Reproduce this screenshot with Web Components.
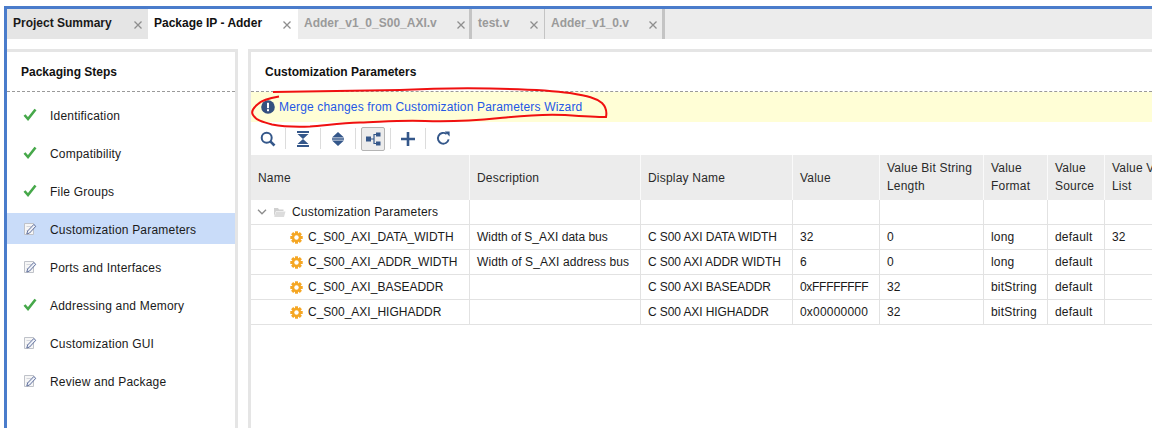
<!DOCTYPE html>
<html><head><meta charset="utf-8">
<style>
html,body{margin:0;padding:0;height:428px;overflow:hidden;background:#fff;font-family:"Liberation Sans",Arial,sans-serif;font-size:12px;color:#111}
</style></head><body>
<ide-shell></ide-shell>
<script>
const ICONS={
check:`<svg width="14" height="13" viewBox="0 0 14 13"><path d="M1.500 7 L5 11 L12.500 1.500" fill="none" stroke="#46a84a" stroke-width="2.600"/></svg>`,
edit:`<svg width="14" height="14" viewBox="0 0 14 14"><path d="M1.500 1.500H10.500V12.500H1.500Z" fill="#f6f6f6" stroke="#bfc2c9"/><path d="M3.500 8.500H7M3.500 4.500H8" stroke="#d4d6dc"/><path d="M3.800 12 L4.600 9 L10.800 2.500 L12.800 4.300 L6.600 11Z" fill="#eef1f8" stroke="#5f6f9c"/></svg>`,
gear:`<svg width="13" height="13" viewBox="0 0 13 13"><g fill="#f5a623"><circle cx="6.500" cy="6.500" r="4.600"/><rect x="5" y="0.300" width="3" height="12.400"/><rect x="0.300" y="5" width="12.400" height="3"/><rect x="5" y="0.300" width="3" height="12.400" transform="rotate(45 6.500 6.500)"/><rect x="5" y="0.300" width="3" height="12.400" transform="rotate(-45 6.500 6.500)"/></g><circle cx="6.500" cy="6.500" r="2.200" fill="#fff"/></svg>`,
folder:`<svg width="13" height="12" viewBox="0 0 13 12"><path d="M1 2h4l1 1.400h4.500V5H3L1 10.500Z" fill="#d0d0d0"/><path d="M3.200 5.500H12.500L11 11H1.200Z" fill="#dcdcdc"/></svg>`,
chev:`<svg width="10" height="6" viewBox="0 0 10 6"><path d="M1 .8 L5 4.800 L9 .8" fill="none" stroke="#8c8c8c" stroke-width="1.300"/></svg>`,
x:`<svg width="8" height="8" viewBox="0 0 8 8"><path d="M.5 .5L7.500 7.500M7.500 .5L.5 7.500" stroke="#8e8e8e" stroke-width="1.300"/></svg>`,
search:`<svg width="16" height="16" viewBox="0 0 16 16"><circle cx="6.700" cy="6.700" r="5" fill="none" stroke="#34578a" stroke-width="2"/><path d="M10.300 10.300L14.500 14.500" stroke="#34578a" stroke-width="2.600"/></svg>`,
collapse:`<svg width="14" height="16" viewBox="0 0 14 16"><path d="M1 1H13M1 15H13" stroke="#34578a" stroke-width="2"/><path d="M1.500 3H12.500L7 8ZM1.500 13H12.500L7 8Z" fill="#34578a"/></svg>`,
expand:`<svg width="14" height="16" viewBox="0 0 14 16"><path d="M7 1L13 6.500H1ZM7 15L13 9.500H1Z" fill="#34578a"/><path d="M1 8H13" stroke="#34578a" stroke-width="1.500"/></svg>`,
hier:`<svg width="16" height="14" viewBox="0 0 16 14"><rect x="1" y="4.500" width="5" height="5" fill="#34578a"/><rect x="11" y="0.500" width="4.500" height="4" fill="#34578a"/><rect x="11" y="9.500" width="4.500" height="4" fill="#34578a"/><path d="M6 7H9V2.500H11M9 7V11.500H11" fill="none" stroke="#34578a" stroke-width="1.200"/></svg>`,
plus:`<svg width="14" height="14" viewBox="0 0 14 14"><path d="M7 0V14M0 7H14" stroke="#34578a" stroke-width="2.600"/></svg>`,
refresh:`<svg width="15" height="15" viewBox="0 0 15 15"><path d="M12.600 8.400A5.400 5.400 0 1 1 10.600 3" fill="none" stroke="#34578a" stroke-width="1.900"/><path d="M8.800 0.600H13.600V5.600Z" fill="#34578a"/></svg>`,
info:`<svg width="14" height="14" viewBox="0 0 14 14"><circle cx="7" cy="7" r="6.800" fill="#34507f"/><rect x="6" y="2.800" width="2" height="5.400" fill="#fff"/><rect x="6" y="9.200" width="2" height="2" fill="#fff"/></svg>`
};
function def(name,css,html){
  customElements.define(name,class extends HTMLElement{
    constructor(){super();this.attachShadow({mode:'open'}).innerHTML=`<style>${css}</style>`+(typeof html==='function'?html(this):html);}
  });
}
def('ide-tab',`:host{display:flex;height:30px;box-sizing:border-box;position:relative;font:bold 12px "Liberation Sans",Arial,sans-serif;color:#9a9a9a;background:#ececec;padding:7px 0 0 6px}
:host([first]){background:#e5e5e5;color:#1a1a1a}
:host([active]){background:#fff;color:#111}
:host([sep]){border-right:3px solid #c4c4c4}
:host([thin]){border-right:1px solid #c4c4c4}
.x{position:absolute;right:var(--xr,6px);top:12px;display:flex}`,`<slot></slot><span class="x">${ICONS.x}</span>`);
def('tab-bar',`:host{display:flex;height:30px;background:#ececec}`,`<slot></slot>`);
def('step-item',`:host{display:flex;align-items:center;height:31px;box-sizing:border-box;padding-top:2px;margin-bottom:7px;padding-left:16px;gap:13px;font:12px "Liberation Sans",Arial,sans-serif;letter-spacing:.2px;color:#1a1a1a}
:host([sel]){background:#c9dcf9}
.i{width:14px;height:14px;display:flex;align-items:center;justify-content:center;margin-top:-2px}`,
el=>`<span class="i">${ICONS[el.getAttribute('icon')]}</span><slot></slot>`);
def('panel-head',`:host{display:block;height:40px;box-sizing:border-box;padding:13px 0 0 14px;font:bold 12px "Liberation Sans",Arial,sans-serif;color:#111;border-bottom:1px dashed #9a9a9a}`,`<slot></slot>`);
def('steps-panel',`:host{display:block;width:228px;border-top:3px solid #e5e5e5;border-right:3px solid #e5e5e5;height:376px}
.list{padding-top:7px}`,
`<panel-head>Packaging Steps</panel-head><div class="list"><slot></slot></div>`);
def('tool-bar',`:host{display:flex;align-items:center;height:33px;box-sizing:border-box;padding:0 0 0 9px;background:#fff}
.b{width:16px;height:16px;display:flex;align-items:center;justify-content:center}
.s{width:1px;height:21px;background:#dcdcdc;margin:0 9px}
.on{width:22px;height:22px;border:1px solid #b4b4b4;border-radius:2px;background:#ececec;margin:0 -4px}`,
`<span class="b">${ICONS.search}</span><span class="s"></span><span class="b">${ICONS.collapse}</span><span class="s"></span><span class="b">${ICONS.expand}</span><span class="s"></span><span class="b on">${ICONS.hier}</span><span class="s"></span><span class="b">${ICONS.plus}</span><span class="s"></span><span class="b">${ICONS.refresh}</span>`);
def('merge-banner',`:host{display:flex;align-items:center;height:30px;background:#fffed6;padding-left:10px;gap:4px;font:12px "Liberation Sans",Arial,sans-serif;letter-spacing:.16px;color:#2457e6}
svg{display:block}`,`${ICONS.info}<slot></slot>`);
const COLS=[219,171,152,87,104,64,57,60];
const HEAD=['Name','Description','Display Name','Value','Value Bit String<br>Length','Value<br>Format','Value<br>Source','Value V<br>List'];
const ROWS=[['C_S00_AXI_DATA_WIDTH','Width of S_AXI data bus','C S00 AXI DATA WIDTH','32','0','long','default','32'],
['C_S00_AXI_ADDR_WIDTH','Width of S_AXI address bus','C S00 AXI ADDR WIDTH','6','0','long','default',''],
['C_S00_AXI_BASEADDR','','C S00 AXI BASEADDR','0xFFFFFFFF','32','bitString','default',''],
['C_S00_AXI_HIGHADDR','','C S00 AXI HIGHADDR','0x00000000','32','bitString','default','']];
const LS={'C S00 AXI DATA WIDTH':-.1,'C S00 AXI ADDR WIDTH':-.1,'C S00 AXI BASEADDR':-.1,'C S00 AXI HIGHADDR':-.1,'0xFFFFFFFF':-.3,'Width of S_AXI address bus':.08,'Width of S_AXI data bus':0,'32':0,'0':0,'6':0};
def('param-table',`:host{display:block;font:12px "Liberation Sans",Arial,sans-serif;letter-spacing:.2px;color:#1a1a1a;overflow:hidden}
.g{display:grid;grid-template-columns:${COLS.map(c=>c+'px').join(' ')};width:914px}
.h{height:45px;box-sizing:border-box;background:#ececec;border-right:1px solid #fafafa;padding:0 0 0 7px;display:flex;align-items:center;line-height:18px;color:#2a2a2a}
.h.two{padding-bottom:2px}
.c{height:25px;box-sizing:border-box;border-right:1px solid #e2e2e2;border-bottom:1px solid #e2e2e2;padding:0 0 0 7px;display:flex;align-items:center;white-space:nowrap}
.n0{padding-left:6px}.n0 svg{margin-right:6px}
.n1{padding-left:39px;letter-spacing:0}.n1 svg{margin-right:5px}`,
()=>`<div class="g">`+HEAD.map(h=>`<div class="h${h.includes('<br>')?' two':''}"><span>${h}</span></div>`).join('')+
`<div class="c n0">${ICONS.chev}${ICONS.folder}<span>Customization Parameters</span></div>`+COLS.slice(1).map(()=>`<div class="c"></div>`).join('')+
ROWS.map(r=>r.map((v,i)=>i?`<div class="c" style="letter-spacing:${LS[v]??.2}px">${v}</div>`:`<div class="c n1">${ICONS.gear}<span>${v}</span></div>`).join('')).join('')+`</div>`);
def('params-panel',`:host{display:block;flex:1;min-width:0;border-top:3px solid #e5e5e5;border-left:3px solid #e5e5e5;height:376px;overflow:hidden}`,
`<panel-head>Customization Parameters</panel-head><merge-banner>Merge changes from Customization Parameters Wizard</merge-banner><tool-bar></tool-bar><param-table></param-table>`);
def('ide-shell',`:host{display:block;height:428px;box-sizing:border-box;margin:6px 0 0 4px;position:relative}
.frame{border-top:3px solid #4a7ccb;border-left:3px solid #4a7ccb;height:422px;box-sizing:border-box}
.body{display:flex;margin-top:10px;gap:10px}
svg.note{position:absolute;left:-4px;top:-6px;pointer-events:none}`,
`<div class="frame"><tab-bar>
<ide-tab first style="width:141px;--xr:6px">Project Summary</ide-tab>
<ide-tab active style="width:150px;--xr:7px">Package IP - Adder</ide-tab>
<ide-tab sep style="width:174px;--xr:4px">Adder_v1_0_S00_AXI.v</ide-tab>
<ide-tab thin style="width:73px;--xr:6px">test.v</ide-tab>
<ide-tab sep style="width:120px;--xr:5px">Adder_v1_0.v</ide-tab>
</tab-bar><div class="body"><steps-panel>
<step-item icon="check">Identification</step-item>
<step-item icon="check">Compatibility</step-item>
<step-item icon="check">File Groups</step-item>
<step-item icon="edit" sel>Customization Parameters</step-item>
<step-item icon="edit">Ports and Interfaces</step-item>
<step-item icon="check">Addressing and Memory</step-item>
<step-item icon="edit">Customization GUI</step-item>
<step-item icon="edit">Review and Package</step-item>
</steps-panel><params-panel></params-panel></div></div>
<svg class="note" width="1152" height="428" viewBox="0 0 1152 428"><path d="M279 96.500C270 98 262 100 258 104C253 108 251 112 253 115C256 120 262 122 272 124.500C285 127 298 127 310 126.500C325 125.500 340 123 360 122.500C380 122 400 120 425 121C450 122 475 120.500 500 118C520 116 540 113.500 565 115C580 116 595 117 606 117C607 112 606 107 602 103C596 98 588 96 570 93C550 90 520 89 490 88.500C460 88 430 88.500 400 90C360 91 320 91.500 273 92" fill="none" stroke="#f01010" stroke-width="2"/></svg>`);
</script>
</body></html>
